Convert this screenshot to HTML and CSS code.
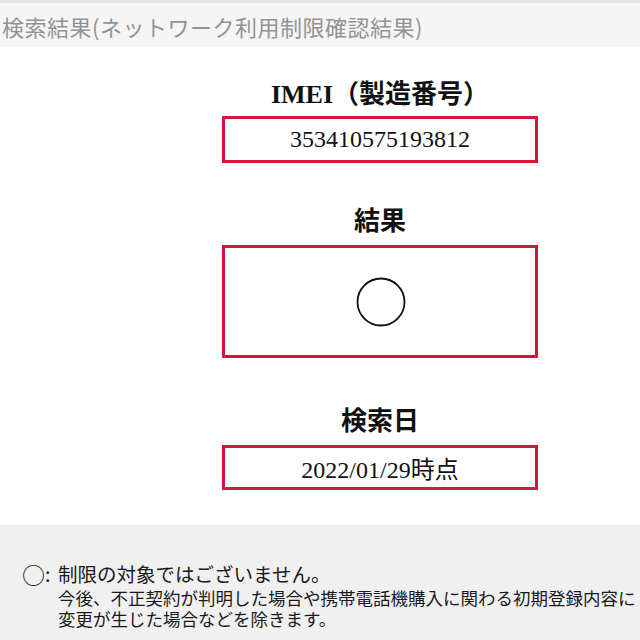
FILE: index.html
```html
<!DOCTYPE html>
<html lang="ja">
<head>
<meta charset="utf-8">
<link rel="stylesheet" href="styles.css">
</head>
<body>
<header class="topbar"><h1 class="topbar-title">検索結果(ネットワーク利用制限確認結果)</h1></header>
<main class="result">
  <section class="block block-imei">
    <h2 class="block-title">IMEI（製造番号）</h2>
    <div class="block-box box-imei">353410575193812</div>
  </section>
  <section class="block block-status">
    <h2 class="block-title">結果</h2>
    <div class="block-box box-status">
      <svg class="mark" width="50" height="50" viewBox="0 0 50 50"><circle cx="25" cy="25" r="23.5" fill="none" stroke="#111" stroke-width="1.8"/></svg>
    </div>
  </section>
  <section class="block block-date">
    <h2 class="block-title">検索日</h2>
    <div class="block-box box-date">2022/01/29時点</div>
  </section>
</main>
<footer class="notes">
  <div class="note">
    <span class="note-mark"><span class="note-ring">○</span>:</span><span class="note-head">制限の対象ではございません。</span>
  </div>
  <p class="note-body"><span class="note-line">今後、不正契約が判明した場合や携帯電話機購入に関わる初期登録内容に</span><span class="note-line">変更が生じた場合などを除きます。</span></p>
</footer>
</body>
</html>
```
FILE: styles.css
```css
html, body {
  margin: 0;
  padding: 0;
  background: #fff;
}
body {
  width: 640px;
  height: 640px;
  overflow: hidden;
  font-family: "Liberation Serif", "Noto Sans CJK JP", serif;
  color: #111;
}
.topbar {
  height: 44px;
  background: #f5f5f5;
  border-top: 3px solid #e4e4e4;
  display: flex;
  align-items: center;
  padding-left: 2px;
}
.topbar-title {
  margin: 0;
  font-family: "Noto Sans CJK JP", sans-serif;
  font-weight: 400;
  font-size: 22px;
  letter-spacing: 0.5px;
  line-height: 26px;
  color: #939393;
  white-space: nowrap;
  padding-top: 2px;
}
.result {
  margin-left: 222px;
  width: 316px;
  padding-top: 33px;
  height: 478px;
  box-sizing: border-box;
  display: flex;
  flex-direction: column;
}
.block {
  display: flex;
  flex-direction: column;
  align-items: center;
}
.block-status { margin-top: 44px; }
.block-date { margin-top: 49px; }
.block-title {
  margin: 0 0 6px;
  font-size: 26px;
  line-height: 30px;
  font-weight: 700;
  white-space: nowrap;
}
.block-status .block-title,
.block-date .block-title { margin-bottom: 8px; }
.block-box {
  width: 100%;
  box-sizing: border-box;
  border: 3px solid #d4163c;
  display: flex;
  align-items: center;
  justify-content: center;
  font-size: 24px;
  white-space: nowrap;
}
.box-imei { height: 47px; }
.box-status { height: 113px; }
.box-date { height: 45px; }
.mark { display: block; margin-left: 2px; }
.notes {
  height: 115px;
  box-sizing: border-box;
  background: #f0f0f0;
  padding: 37px 0 0 22px;
  font-family: "Noto Sans CJK JP", sans-serif;
  color: #1a1a1a;
}
.note {
  display: flex;
  font-size: 19.5px;
  line-height: 24px;
  white-space: nowrap;
}
.note-mark {
  width: 36px;
  display: flex;
  align-items: center;
}
.note-ring {
  font-size: 23px;
  line-height: 24px;
}
.note-body {
  margin: 1px 0 0 36px;
  display: flex;
  flex-direction: column;
  font-size: 17.5px;
  line-height: 21px;
  white-space: nowrap;
}
.note-line {
  display: block;
}
```
